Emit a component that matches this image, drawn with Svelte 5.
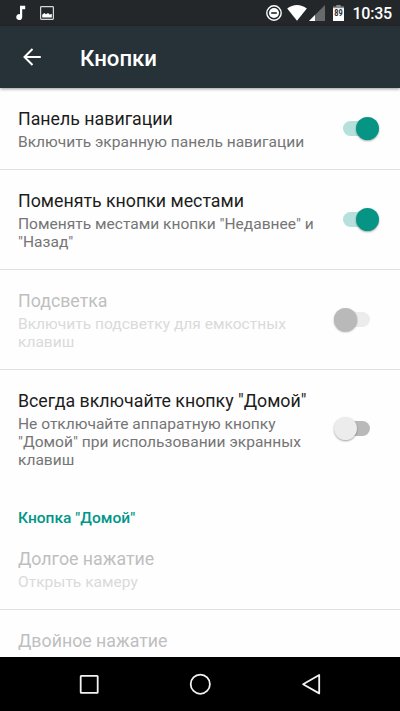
<script>
  let settings = [
    {
      title: 'Панель навигации',
      summary: 'Включить экранную панель навигации',
      on: true
    },
    {
      title: 'Поменять кнопки местами',
      summary: 'Поменять местами кнопки "Недавнее" и\n"Назад"',
      on: true
    },
    {
      title: 'Подсветка',
      summary: 'Включить подсветку для емкостных\nклавиш',
      on: false,
      disabled: true
    },
    {
      title: 'Всегда включайте кнопку "Домой"',
      summary: 'Не отключайте аппаратную кнопку\n"Домой" при использовании экранных\nклавиш',
      on: false
    }
  ];

  const homeActions = [
    { title: 'Долгое нажатие', summary: 'Открыть камеру' },
    { title: 'Двойное нажатие' }
  ];

  const toggle = (item) => {
    item.on = !item.on;
    settings = settings;
  };
</script>

<div class="screen">
  <div class="status-bar">
    <svg class="note" width="12" height="16" viewBox="0 0 12 16">
      <path d="M5 0.8h5.2v3.4H7.2v7.6a3 3 0 1 1-2.2-2.6z" fill="#fff" />
    </svg>
    <svg class="picture" width="14" height="14" viewBox="0 0 14 14">
      <rect x="0.6" y="0.6" width="12.8" height="12.8" rx="0.8" fill="none" stroke="#d5d7d8" stroke-width="1.2" />
      <path d="M2.2 11.4V8.8L4.4 7l1.5 1.3 2.2-1.2 1.4 1.4 2.3-.4v3.3z" fill="#fff" />
    </svg>
    <span class="spacer"></span>
    <svg class="dnd" width="16" height="16" viewBox="0 0 16 16">
      <circle cx="8" cy="8" r="7.2" fill="none" stroke="#fff" stroke-width="1.4" />
      <circle cx="8" cy="8" r="5" fill="#fff" />
      <rect x="5.2" y="7.2" width="5.6" height="1.6" fill="#23272a" />
    </svg>
    <svg class="wifi" width="20" height="16" viewBox="0 0 20 16">
      <path d="M0.2 3.6C6-1.1 14-1.1 19.8 3.6L10 15.7z" fill="#fff" />
    </svg>
    <svg class="signal" width="16" height="16" viewBox="0 0 16 16">
      <path d="M16 0v16H0z" fill="#67696b" />
      <path d="M6 10v6H0z" fill="#fff" />
    </svg>
    <svg class="battery" width="11" height="16" viewBox="0 0 11 16">
      <path d="M3.3 0h4.4v1.6H11V5H0V1.6h3.3z" fill="#8b8d8e" />
      <path d="M0 3.2h11V16H0z" fill="#fff" />
      <text x="5.5" y="11.4" text-anchor="middle" textLength="8.4" lengthAdjust="spacingAndGlyphs">89</text>
    </svg>
    <span class="clock">10:35</span>
  </div>

  <header class="toolbar">
    <svg width="18" height="18" viewBox="0 0 18 18">
      <path d="M17.8 9H1.6M9.5 1L1.5 9l8 8" fill="none" stroke="#fff" stroke-width="2" />
    </svg>
    <h1>Кнопки</h1>
  </header>

  <main>
    {#each settings as item, i}
      <div class="row" class:disabled={item.disabled} class:last={i === settings.length - 1}>
        <div class="label">
          <div class="title">{item.title}</div>
          <div class="summary">{item.summary}</div>
        </div>
        <button
          class="switch"
          class:on={item.on}
          disabled={item.disabled}
          aria-label={item.title}
          on:click={() => toggle(item)}
        >
          <span class="track"></span>
          <span class="thumb"></span>
        </button>
      </div>
    {/each}

    <h2>Кнопка "Домой"</h2>
    {#each homeActions as item}
      <div class="row disabled">
        <div class="label">
          <div class="title">{item.title}</div>
          {#if item.summary}
            <div class="summary">{item.summary}</div>
          {/if}
        </div>
      </div>
    {/each}
  </main>

  <nav>
    <svg width="22" height="22" viewBox="0 0 22 22">
      <rect x="2.7" y="2.8" width="17" height="17" rx="0.6" />
    </svg>
    <svg width="22" height="22" viewBox="0 0 22 22">
      <circle cx="11.3" cy="11.2" r="9.6" />
    </svg>
    <svg width="22" height="22" viewBox="0 0 22 22">
      <path d="M19.2 2v18.4L3.1 11.2z" stroke-linejoin="round" />
    </svg>
  </nav>
</div>

<style>
:global(body) {
  margin: 0;
}

.screen {
  width: 400px;
  height: 711px;
  display: flex;
  flex-direction: column;
  overflow: hidden;
  background: #fefefe;
  font-family: Roboto, "Noto Sans", sans-serif;
}

.status-bar {
  height: 26px;
  flex: none;
  box-sizing: border-box;
  display: flex;
  align-items: center;
  padding: 0 8px 0 15px;
  background: #23272a;
  color: #fff;
}

.note {
  margin-right: 13px;
}

.spacer {
  flex: 1;
}

.dnd {
  margin-right: 5px;
}

.wifi {
  margin-right: 2px;
}

.signal {
  margin-right: 8px;
}

.battery {
  margin-right: 8px;
}

.battery text {
  font-size: 8.5px;
  font-weight: 700;
  fill: #23272a;
}

.clock {
  font-size: 16px;
  font-weight: 500;
  line-height: 26px;
  padding-top: 2px;
  letter-spacing: -0.2px;
}

.toolbar {
  height: 62px;
  flex: none;
  display: flex;
  align-items: center;
  padding-left: 23px;
  background: #263238;
  box-shadow: 0 1px 3px rgba(0, 0, 0, 0.4);
  z-index: 1;
}

h1 {
  margin: 2px 0 0 39px;
  color: #fff;
  font-size: 22.2px;
  font-weight: 500;
  line-height: 26px;
}

main {
  flex: 1;
  min-height: 0;
  overflow: hidden;
}

.row {
  box-sizing: border-box;
  display: flex;
  align-items: center;
  justify-content: space-between;
  padding: 21px 20px 18px 18px;
  border-bottom: 1px solid #e0e0e0;
}

.row.last {
  border-bottom-color: transparent;
}

.title {
  color: #1c1c1c;
  font-size: 17.78px;
  line-height: 21px;
  margin-bottom: 3px;
  white-space: nowrap;
}

.summary {
  color: #757575;
  font-size: 15.56px;
  line-height: 18px;
  white-space: pre;
}

.disabled .title {
  color: #bfbfbf;
}

.disabled .summary {
  color: #dadada;
}

.switch {
  position: relative;
  flex: none;
  width: 46px;
  height: 24px;
  margin-top: -2px;
  padding: 0;
  border: 0;
  background: none;
}

.track {
  position: absolute;
  left: 9px;
  top: 4px;
  width: 27px;
  height: 15px;
  border-radius: 8px;
  background: #b9b9b9;
}

.thumb {
  position: absolute;
  left: 0;
  top: 0;
  width: 23px;
  height: 23px;
  border-radius: 50%;
  background: #ececec;
  box-shadow: 0 1px 2px rgba(0, 0, 0, 0.35);
}

.on .track {
  background: #b5e0db;
}

.on .thumb {
  left: 22px;
  background: #069485;
}

.disabled .track {
  background: #ececec;
}

.disabled .thumb {
  background: #b9b9b9;
}

h2 {
  margin: 0;
  height: 40px;
  box-sizing: border-box;
  padding: 21px 18px 0;
  color: #009688;
  font-size: 15.56px;
  font-weight: 500;
  line-height: 18px;
}

nav {
  height: 54px;
  flex: none;
  display: flex;
  align-items: center;
  justify-content: center;
  gap: 89px;
  background: #000;
}

nav svg {
  fill: none;
  stroke: #f2f2f2;
  stroke-width: 1.8;
}
</style>
